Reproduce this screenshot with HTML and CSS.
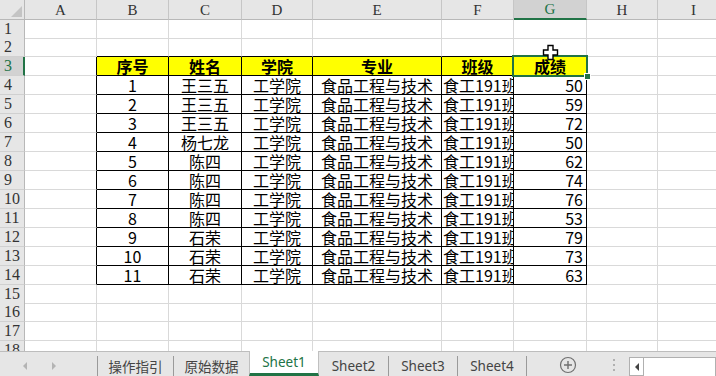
FILE: index.html
```html
<!DOCTYPE html>
<html lang="zh-CN">
<head>
<meta charset="UTF-8">
<title>Sheet1</title>
<link rel="stylesheet" href="styles.css">
</head>
<body>

<div class="sheet">
  <div class="row head">
    <div class="corner"><svg width="24" height="19" viewBox="0 0 24 19"><polygon points="22,6 22,17 11,17" fill="#c4c4c4"/></svg></div>
    <div class="ch">A</div><div class="ch">B</div><div class="ch">C</div><div class="ch">D</div><div class="ch">E</div><div class="ch">F</div><div class="ch on">G</div><div class="ch">H</div><div class="ch">I</div>
  </div>
  <div class="row short"><div class="rh">1</div><div class="c"></div><div class="c"></div><div class="c"></div><div class="c"></div><div class="c"></div><div class="c"></div><div class="c"></div><div class="c"></div><div class="c"></div></div>
  <div class="row"><div class="rh">2</div><div class="c"></div><div class="c tt"></div><div class="c tt"></div><div class="c tt"></div><div class="c tt"></div><div class="c tt"></div><div class="c tt"></div><div class="c"></div><div class="c"></div></div>
  <div class="row"><div class="rh on">3</div><div class="c tl"></div><div class="c t th">序号</div><div class="c t th">姓名</div><div class="c t th">学院</div><div class="c t th">专业</div><div class="c t th">班级</div><div class="c t th sel">成绩</div><div class="c"></div><div class="c"></div></div>
  <div class="row"><div class="rh">4</div><div class="c tl"></div><div class="c t mid">1</div><div class="c t mid">王三五</div><div class="c t mid">工学院</div><div class="c t mid">食品工程与技术</div><div class="c t clip">食工191班</div><div class="c t num">50</div><div class="c"></div><div class="c"></div></div>
  <div class="row"><div class="rh">5</div><div class="c tl"></div><div class="c t mid">2</div><div class="c t mid">王三五</div><div class="c t mid">工学院</div><div class="c t mid">食品工程与技术</div><div class="c t clip">食工191班</div><div class="c t num">59</div><div class="c"></div><div class="c"></div></div>
  <div class="row"><div class="rh">6</div><div class="c tl"></div><div class="c t mid">3</div><div class="c t mid">王三五</div><div class="c t mid">工学院</div><div class="c t mid">食品工程与技术</div><div class="c t clip">食工191班</div><div class="c t num">72</div><div class="c"></div><div class="c"></div></div>
  <div class="row"><div class="rh">7</div><div class="c tl"></div><div class="c t mid">4</div><div class="c t mid">杨七龙</div><div class="c t mid">工学院</div><div class="c t mid">食品工程与技术</div><div class="c t clip">食工191班</div><div class="c t num">50</div><div class="c"></div><div class="c"></div></div>
  <div class="row"><div class="rh">8</div><div class="c tl"></div><div class="c t mid">5</div><div class="c t mid">陈四</div><div class="c t mid">工学院</div><div class="c t mid">食品工程与技术</div><div class="c t clip">食工191班</div><div class="c t num">62</div><div class="c"></div><div class="c"></div></div>
  <div class="row"><div class="rh">9</div><div class="c tl"></div><div class="c t mid">6</div><div class="c t mid">陈四</div><div class="c t mid">工学院</div><div class="c t mid">食品工程与技术</div><div class="c t clip">食工191班</div><div class="c t num">74</div><div class="c"></div><div class="c"></div></div>
  <div class="row"><div class="rh">10</div><div class="c tl"></div><div class="c t mid">7</div><div class="c t mid">陈四</div><div class="c t mid">工学院</div><div class="c t mid">食品工程与技术</div><div class="c t clip">食工191班</div><div class="c t num">76</div><div class="c"></div><div class="c"></div></div>
  <div class="row"><div class="rh">11</div><div class="c tl"></div><div class="c t mid">8</div><div class="c t mid">陈四</div><div class="c t mid">工学院</div><div class="c t mid">食品工程与技术</div><div class="c t clip">食工191班</div><div class="c t num">53</div><div class="c"></div><div class="c"></div></div>
  <div class="row"><div class="rh">12</div><div class="c tl"></div><div class="c t mid">9</div><div class="c t mid">石荣</div><div class="c t mid">工学院</div><div class="c t mid">食品工程与技术</div><div class="c t clip">食工191班</div><div class="c t num">79</div><div class="c"></div><div class="c"></div></div>
  <div class="row"><div class="rh">13</div><div class="c tl"></div><div class="c t mid">10</div><div class="c t mid">石荣</div><div class="c t mid">工学院</div><div class="c t mid">食品工程与技术</div><div class="c t clip">食工191班</div><div class="c t num">73</div><div class="c"></div><div class="c"></div></div>
  <div class="row"><div class="rh">14</div><div class="c tl"></div><div class="c t mid">11</div><div class="c t mid">石荣</div><div class="c t mid">工学院</div><div class="c t mid">食品工程与技术</div><div class="c t clip">食工191班</div><div class="c t num">63</div><div class="c"></div><div class="c"></div></div>
  <div class="row short"><div class="rh">15</div><div class="c"></div><div class="c"></div><div class="c"></div><div class="c"></div><div class="c"></div><div class="c"></div><div class="c"></div><div class="c"></div><div class="c"></div></div>
  <div class="row"><div class="rh">16</div><div class="c"></div><div class="c"></div><div class="c"></div><div class="c"></div><div class="c"></div><div class="c"></div><div class="c"></div><div class="c"></div><div class="c"></div></div>
  <div class="row"><div class="rh">17</div><div class="c"></div><div class="c"></div><div class="c"></div><div class="c"></div><div class="c"></div><div class="c"></div><div class="c"></div><div class="c"></div><div class="c"></div></div>
  <div class="row"><div class="rh">18</div><div class="c"></div><div class="c"></div><div class="c"></div><div class="c"></div><div class="c"></div><div class="c"></div><div class="c"></div><div class="c"></div><div class="c"></div></div>

  <!-- mouse pointer over G2 -->
  <svg class="pointer" width="17" height="17" viewBox="0 0 17 17">
    <path d="M6 1.5h5v4.5h4.5v5h-4.5v4.5h-5v-4.5h-4.5v-5h4.5z" fill="#fff" stroke="#000" stroke-width="1.4"/>
  </svg>
</div>

<div class="tabbar">
  <div class="nav">
    <span class="arr left"></span>
    <span class="arr right"></span>
  </div>
  <div class="tab wide">操作指引</div>
  <div class="tab wide before-active">原始数据</div>
  <div class="tab active">Sheet1</div>
  <div class="tab">Sheet2</div>
  <div class="tab narrow">Sheet3</div>
  <div class="tab narrow">Sheet4</div>
  <div class="add">
    <svg width="18" height="18" viewBox="0 0 18 18">
      <circle cx="9" cy="9" r="7.5" fill="none" stroke="#707070" stroke-width="1.2"/>
      <path d="M9 5v8M5 9h8" stroke="#707070" stroke-width="1.4"/>
    </svg>
  </div>
  <div class="dots"><i></i><i></i><i></i></div>
  <div class="hscroll">
    <div class="sbtn"><span class="arr left dark"></span></div>
    <div class="thumb"></div>
  </div>
</div>

</body>
</html>
```

FILE: styles.css
```css
body {
  margin: 0;
  width: 716px;
  height: 376px;
  overflow: hidden;
  background: #fff;
  font-family: "Noto Sans CJK SC", sans-serif;
}

.sheet {
  position: relative;
  height: 351px;
  overflow: hidden;
}

.row {
  display: grid;
  grid-template-columns: 25px 72px 72px 73px 71px 129px 72px 73px 71px 72px;
  height: 19px;
}

.row.short {
  height: 18px;
}

.row.head {
  height: 20px;
}

/* headers */
.corner,
.ch,
.rh {
  box-sizing: border-box;
  background-color: #e6e6e6;
  color: #333;
  font-family: "Liberation Serif", "DejaVu Serif", serif;
  font-size: 15px;
  display: flex;
  align-items: center;
  justify-content: center;
}

.corner {
  border-right: 1px solid #b8b8b8;
  border-bottom: 1px solid #b8b8b8;
}

.ch {
  border-right: 1px solid #c6c6c6;
  border-bottom: 1px solid #b8b8b8;
  padding-top: 1px;
}

.ch.on {
  background-color: #d2d2d2;
  color: #217346;
  border-bottom: 2px solid #217346;
}

.rh {
  border-right: 1px solid #b8b8b8;
  border-bottom: 1px solid #d0d0d0;
  justify-content: flex-start;
  padding-left: 4px;
  font-size: 16px;
}

.rh.on {
  background-color: #d2d2d2;
  color: #217346;
  border-right: 2px solid #217346;
}

/* cells */
.c {
  box-sizing: border-box;
  border-right: 1px solid #d9d9d9;
  border-bottom: 1px solid #d9d9d9;
  display: flex;
  align-items: center;
  padding: 0 1px;
  white-space: nowrap;
  font-size: 16px;
  line-height: 18px;
  color: #000;
}

.c.clip {
  overflow: hidden;
}

.c.tt {
  border-bottom-color: #000;
}

.c.tl {
  border-right-color: #000;
}

.c.t {
  border-right-color: #000;
  border-bottom-color: #000;
}

.c.th {
  background-color: #ffff00;
  font-weight: bold;
  justify-content: center;
}

.c.mid {
  justify-content: center;
}

.c.num {
  justify-content: flex-end;
  padding-right: 3px;
}

.c.sel {
  position: relative;
}

.c.sel::before {
  content: "";
  position: absolute;
  top: -2px;
  left: -2px;
  right: -2px;
  bottom: -2px;
  border: 2px solid #217346;
}

.c.sel::after {
  content: "";
  position: absolute;
  right: -5px;
  bottom: -5px;
  width: 5px;
  height: 5px;
  background-color: #217346;
  border: 1px solid #fff;
}

.pointer {
  position: absolute;
  left: 542px;
  top: 44px;
}

/* sheet tabs */
.tabbar {
  box-sizing: border-box;
  height: 25px;
  display: flex;
  background-color: #e6e6e6;
  border-top: 1px solid #bdbdbd;
  font-size: 13.5px;
  color: #444;
}

.nav {
  width: 98px;
  display: flex;
  align-items: center;
  border-right: 1px solid #9a9a9a;
  margin-top: 4px;
  padding-left: 23px;
  gap: 25px;
  box-sizing: border-box;
}

.arr {
  width: 0;
  height: 0;
  border-top: 4px solid transparent;
  border-bottom: 4px solid transparent;
}

.arr.left {
  border-right: 4px solid #b4b4b4;
}

.arr.right {
  border-left: 4px solid #b4b4b4;
}

.arr.left.dark {
  border-right-color: #444;
}

.tab {
  width: 69px;
  display: flex;
  align-items: center;
  justify-content: center;
  margin-top: 4px;
  border-right: 1px solid #9a9a9a;
  font-family: "Noto Sans", "Noto Sans CJK SC", sans-serif;
}

.tab.wide {
  width: 75px;
}

.tab.narrow {
  width: 68px;
}

.tab.before-active {
  border-right: none;
  width: 75px;
}

.tab.active {
  box-sizing: border-box;
  width: 70px;
  margin-top: -1px;
  background-color: #fff;
  color: #217346;
  border-left: 1px solid #c0c0c0;
  border-right: 1px solid #c0c0c0;
  border-bottom: 3px solid #217346;
}

.add {
  display: flex;
  align-items: center;
  margin-left: 32px;
  margin-top: 2px;
}

.dots {
  display: flex;
  flex-direction: column;
  justify-content: center;
  gap: 3px;
  margin-left: 36px;
  margin-top: 2px;
}

.dots i {
  width: 2px;
  height: 2px;
  background-color: #b0b0b0;
}

.hscroll {
  display: flex;
  flex: 1;
  margin-left: 14px;
  margin-top: 5px;
}

.sbtn {
  width: 15px;
  box-sizing: border-box;
  background-color: #fff;
  border: 1px solid #b0b0b0;
  display: flex;
  align-items: center;
  justify-content: center;
}

.thumb {
  flex: 1;
  background-color: #fff;
  border: 1px solid #b0b0b0;
  border-left: none;
  border-bottom: none;
}
```
